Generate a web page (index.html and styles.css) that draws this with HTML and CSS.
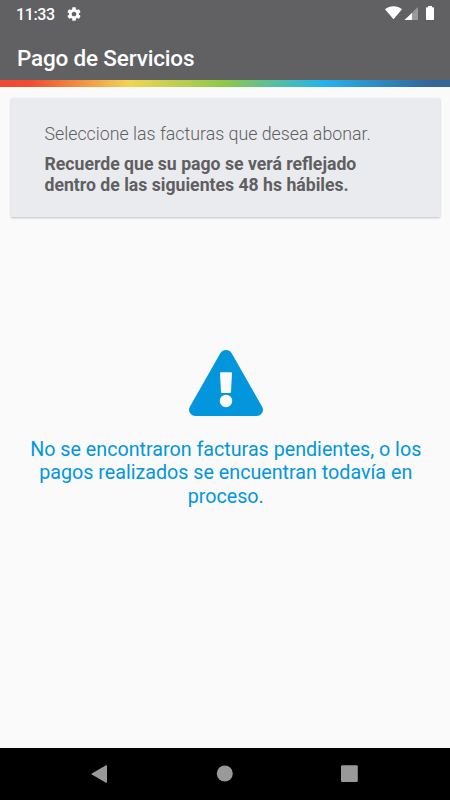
FILE: index.html
```html
<!DOCTYPE html>
<html lang="es">
  <head>
    <meta charset="UTF-8">
    <title>Pago de Servicios</title>
    <link rel="stylesheet" href="styles.css">
  </head>
  <body>
    <!-- Status bar and title -->
    <header id="header">
      <div class="status">
        <span class="time">11:33</span>
        <svg class="gear" width="16" height="16" viewBox="0 0 24 24"><path fill="#fff" d="M19.43 12.98c.04-.32.07-.64.07-.98s-.03-.66-.07-.98l2.11-1.65c.19-.15.24-.42.12-.64l-2-3.46c-.12-.22-.39-.3-.61-.22l-2.49 1c-.52-.4-1.08-.73-1.69-.98l-.38-2.65C14.46 2.18 14.25 2 14 2h-4c-.25 0-.46.18-.49.42l-.38 2.65c-.61.25-1.17.59-1.69.98l-2.49-1c-.23-.09-.49 0-.61.22l-2 3.46c-.13.22-.07.49.12.64l2.11 1.65c-.04.32-.07.65-.07.98s.03.66.07.98l-2.11 1.65c-.19.15-.24.42-.12.64l2 3.46c.12.22.39.3.61.22l2.49-1c.52.4 1.08.73 1.69.98l.38 2.65c.03.24.24.42.49.42h4c.25 0 .46-.18.49-.42l.38-2.65c.61-.25 1.17-.59 1.69-.98l2.49 1c.23.09.49 0 .61-.22l2-3.46c.12-.22.07-.49-.12-.64l-2.11-1.65zM12 15.5c-1.93 0-3.5-1.57-3.5-3.5s1.57-3.5 3.5-3.5 3.5 1.57 3.5 3.5-1.57 3.5-3.5 3.5z"/></svg>
        <svg class="signals" width="50" height="16" viewBox="0 0 50 16">
          <path fill="#fff" d="M0 3.200C4.600-.7 12.400-.7 17 3.200L8.500 13.300z"/>
          <path fill="#999" d="M33 1V14H19.500z"/>
          <path fill="#fff" d="M27 7V14h-7.500z"/>
          <path fill="#fff" d="M43 0h4v1.200h1.300q.7 0 .7.700v11.400q0 .7-.7.700h-6.600q-.7 0-.7-.7V1.900q0-.7.700-.7H43z"/>
        </svg>
      </div>
      <h1>Pago de Servicios</h1>
    </header>
    <div id="rainbow"></div>

    <!-- Content -->
    <main id="content">
      <div class="notice">
        <p>Seleccione las facturas que desea abonar.</p>
        <p class="strong">Recuerde que su pago se verá reflejado<br>dentro de las siguientes 48 hs hábiles.</p>
      </div>
      <div class="empty">
        <svg width="74" height="66" viewBox="0 0 74 66">
          <path fill="#0396dd" d="M31.300 3.200Q33.300 0 37 0T42.700 3.200L73 56.500Q75 60 73 63T67.500 66H6.500Q3 66 1 63T1 56.500z"/>
          <path fill="#fafafa" d="M32 22.300H42q1 0 1 1L42 42q0 1-1 1h-8q-1 0-1-1L31 23.300q0-1 1-1z"/>
          <circle fill="#fafafa" cx="37" cy="51" r="6.200"/>
        </svg>
        <p>No se encontraron facturas pendientes, o los<br>pagos realizados se encuentran todavía en<br>proceso.</p>
      </div>
    </main>

    <!-- Navigation bar -->
    <nav id="navbar">
      <svg width="450" height="52" viewBox="0 0 450 52">
        <g fill="#999">
          <path d="M106 17.300q1-.5 1 .7v16q0 1.200-1 .7L91.800 26.600q-.8-.6 0-1.200z"/>
          <circle cx="224.800" cy="25.500" r="8"/>
          <rect x="341" y="17.200" width="16.800" height="16.800" rx="1.200"/>
        </g>
      </svg>
    </nav>
  </body>
</html>
```

FILE: styles.css
```css
body {
  display: flex;
  flex-direction: column;
  height: 800px;
  margin: 0;
  font-family: Roboto, sans-serif;
  background-color: #fafafa;
}
h1, p {
  margin: 0;
}
svg {
  display: block;
}
#header {
  height: 80px;
  color: white;
  background-color: #616163;
}
.status {
  display: flex;
  align-items: center;
  height: 28px;
  padding: 0 15px 0 16px;
}
.gear {
  margin-top: -1px;
}
.time {
  width: 50px;
  padding-top: 2px;
  font-size: 16px;
  font-weight: 500;
  letter-spacing: -0.4px;
  line-height: 26px;
}
.signals {
  margin-left: auto;
}
h1 {
  padding: 16px 0 0 17px;
  font-size: 22.500px;
  font-weight: 500;
  letter-spacing: -0.180px;
  line-height: 28px;
}
#rainbow {
  height: 7px;
  background: linear-gradient(to right, #f04a32 0, #f04c32 30px, #f2d553 130px, #8cc84b 225px, #25b4ee 322px, #336699 430px, #336699 100%);
}
#content {
  flex: 1;
}
.notice {
  box-sizing: border-box;
  height: 119px;
  margin: 11px 10px 0 11px;
  padding: 25px 33.500px;
  color: #5f5f61;
  background-color: #eaebef;
  box-shadow: 0 0.500px 2px rgba(0, 0, 0, 0.22);
  font-size: 17.800px;
  font-weight: 300;
  line-height: 21px;
}
.notice .strong {
  margin-top: 10px;
  font-size: 17.650px;
  font-weight: 700;
}
.empty {
  display: flex;
  flex-direction: column;
  align-items: center;
  padding: 133px 0 0 1.500px;
  color: #0396dd;
  font-size: 19.700px;
  line-height: 23.300px;
  text-align: center;
}
.empty p {
  margin-top: 22px;
  white-space: nowrap;
}
#navbar {
  height: 52px;
  background-color: black;
}
```
